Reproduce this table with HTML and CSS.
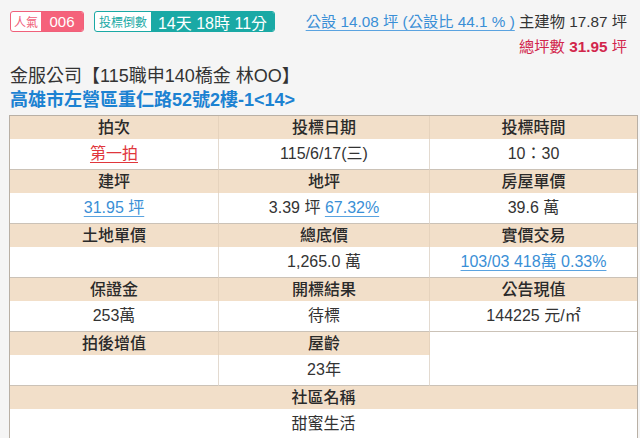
FILE: index.html
```html
<!DOCTYPE html>
<html lang="zh-Hant">
<head>
<meta charset="utf-8">
<title>拍賣物件</title>
<link rel="stylesheet" href="styles.css">
</head>
<body>
<div class="page">
  <div class="top">
    <div class="badges">
      <span class="badge pink"><span class="b-label">人氣</span><span class="b-value">006</span></span>
      <span class="badge teal"><span class="b-label">投標倒數</span><span class="b-value">14天 18時 11分</span></span>
    </div>
    <div class="area">
      <div class="area-line"><a class="link" href="#">公設 14.08 坪 (公設比 44.1 % )</a> 主建物 17.87 坪</div>
      <div class="area-line total">總坪數 <b>31.95</b> 坪</div>
    </div>
  </div>
  <h1 class="title">金服公司【115職申140橋金 林OO】</h1>
  <h2 class="address">高雄市左營區重仁路52號2樓-1&lt;14&gt;</h2>
  <div class="grid">
    <div class="h">拍次</div><div class="h">投標日期</div><div class="h">投標時間</div>
    <div class="d"><a class="red" href="#">第一拍</a></div><div class="d">115/6/17(三)</div><div class="d">10：30</div>

    <div class="h">建坪</div><div class="h">地坪</div><div class="h">房屋單價</div>
    <div class="d"><a class="link" href="#">31.95 坪</a></div><div class="d">3.39 坪 <a class="link" href="#">67.32%</a></div><div class="d">39.6 萬</div>

    <div class="h">土地單價</div><div class="h">總底價</div><div class="h">實價交易</div>
    <div class="d"></div><div class="d">1,265.0 萬</div><div class="d"><a class="link" href="#">103/03 418萬 0.33%</a></div>

    <div class="h">保證金</div><div class="h">開標結果</div><div class="h">公告現值</div>
    <div class="d">253萬</div><div class="d">待標</div><div class="d">144225 元/㎡</div>

    <div class="h">拍後增值</div><div class="h">屋齡</div><div class="blank"></div>
    <div class="d"></div><div class="d">23年</div>

    <div class="h wide">社區名稱</div>
    <div class="d wide">甜蜜生活</div>
  </div>
</div>
</body>
</html>
```
FILE: styles.css
```css
* { box-sizing: border-box; }
html, body { margin: 0; padding: 0; }
body {
  background: #f5f5f5;
  font-family: "Liberation Sans", "Noto Sans CJK TC", sans-serif;
  color: #333;
}
.page { padding: 11px 2px 0 9px; width: 640px; }

.top { display: flex; align-items: flex-start; }
.badges { display: flex; gap: 10px; padding-left: 1px; }
.badge {
  display: flex;
  height: 21px;
  border: 1px solid;
  border-radius: 3px;
  overflow: hidden;
  background: #fff;
}
.b-label {
  display: flex; align-items: center; justify-content: center;
  font-size: 12px;
}
.b-value {
  display: flex; align-items: center; justify-content: center;
  color: #fff;
}
.pink { border-color: #f0607a; color: #f0607a; }
.pink .b-label { width: 30px; }
.pink .b-value { background: #f5627b; width: 42px; font-size: 15px; }
.teal { border-color: #1aa9a5; color: #1aa9a5; }
.teal .b-label { width: 56px; }
.teal .b-value { background: #1aa9a5; width: 123px; font-size: 16px; }

.area { margin-left: auto; padding-right: 11px; text-align: right; font-size: 15.3px; }
.area-line { line-height: 21px; white-space: nowrap; }
.area-line.total { margin-top: 4px; line-height: 22px; color: #d2264c; }
.area-line.total b { font-weight: bold; }

.link { color: #3a8fd6; text-decoration: underline; text-underline-offset: 3px; text-decoration-color: #5aa3e0; }
.red { color: #e0363c; text-decoration: underline; text-underline-offset: 3px; }

.title {
  margin: 6px 0 0 1px;
  font-size: 18px;
  font-weight: normal;
  line-height: 24px;
  color: #333;
}
.address {
  margin: 0 0 3px 1px;
  font-size: 18px;
  font-weight: bold;
  line-height: 24px;
  color: #1c82d2;
}

.grid {
  display: grid;
  grid-template-columns: 209px 211px 1fr;
  grid-template-rows: repeat(6, 23px 31px);
  width: 629px;
  border: 1px solid #b9b0a5;
  border-bottom: none;
  background: #fff;
}
.h, .d, .blank {
  text-align: center;
  font-size: 16px;
  color: #333;
  border-right: 1px solid #e3dad0;
  white-space: nowrap;
}
.h:nth-child(3n), .d:nth-child(3n) { border-right: none; }
.h { background: #f2dfc9; border-right-color: #e6d3bd; line-height: 23px; font-weight: 500; color: #2a2a2a; }
.d { border-bottom: 1px solid #cbc2b7; line-height: 30px; }
.blank { grid-column: 3; grid-row: span 2; border-right: none; border-bottom: 1px solid #cbc2b7; }
.wide { grid-column: 1 / -1; border-right: none; }
```
